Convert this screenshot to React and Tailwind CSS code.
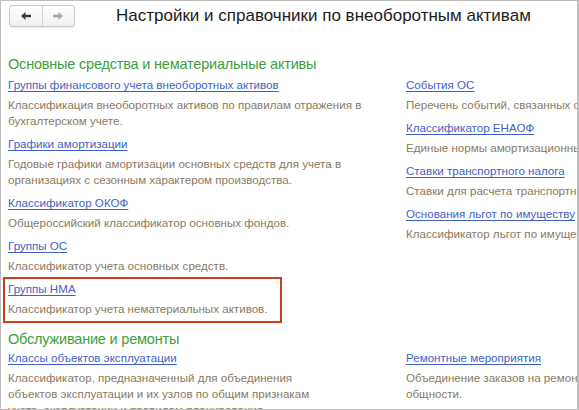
import React from "react";

const LINK = "text-[#3f63c4] underline underline-offset-[2px] decoration-[#3f63c4] leading-[16px] text-[11.6px] whitespace-nowrap";
const DESC = "text-[#8a7a62] leading-[16px] text-[11.6px] mt-[4px]";
const HEAD = "text-[14.5px] tracking-[-0.2px] leading-[20px] text-[#3d9e3d] whitespace-nowrap";

function Item({ title, desc, hl }) {
  return (
    <div className="relative mb-[7px]">
      <div className={LINK}>{title}</div>
      <div className={DESC}>{desc}</div>
      {hl && (
        <div className="absolute left-[-5px] top-[-4px] w-[279px] h-[46px] border-2 border-[#c8401c] pointer-events-none" />
      )}
    </div>
  );
}

export default function App() {
  return (
    <div
      className="relative w-[579px] h-[410px] overflow-hidden bg-white"
      style={{ fontFamily: '"Liberation Sans", Arial, sans-serif' }}
    >
      <div className="absolute inset-0 border border-[#bdbdbd] border-r-2 pointer-events-none z-10" />
      <div className="flex items-center h-[30px] pt-[1px]">
        <div className="ml-[9px] flex h-[22px] w-[66px] rounded-[3px] border border-[#c8c8c8] bg-gradient-to-b from-white to-[#f0f0f0] shadow-[0_1px_1px_rgba(0,0,0,0.08)]">
          <div className="flex-1 flex items-center justify-center border-r border-[#d4d4d4]">
            <svg width="12" height="10" viewBox="0 0 12 10">
              <path d="M1 5 L5.5 1 L5.5 3.8 L11 3.8 L11 6.2 L5.5 6.2 L5.5 9 Z" fill="#3a3a3a" />
            </svg>
          </div>
          <div className="flex-1 flex items-center justify-center">
            <svg width="12" height="10" viewBox="0 0 12 10">
              <path d="M11 5 L6.5 1 L6.5 3.8 L1 3.8 L1 6.2 L6.5 6.2 L6.5 9 Z" fill="#a8a8a8" />
            </svg>
          </div>
        </div>
        <div className="ml-[41px] text-[17px] text-[#1c1c1c] leading-[22px] whitespace-nowrap">
          Настройки и справочники по внеоборотным активам
        </div>
      </div>

      <div className="pl-[8px] pt-[24px]">
        <div className={HEAD + " mb-[3px]"}>
          Основные средства и нематериальные активы
        </div>
        <div className="flex">
          <div className="w-[398px] shrink-0 pr-[10px]">
            <Item
              title="Группы финансового учета внеоборотных активов"
              desc={<>Классификация внеоборотных активов по правилам отражения в<br />бухгалтерском учете.</>}
            />
            <Item
              title="Графики амортизации"
              desc={<>Годовые графики амортизации основных средств для учета в<br />организациях с сезонным характером производства.</>}
            />
            <Item title="Классификатор ОКОФ" desc="Общероссийский классификатор основных фондов." />
            <Item title="Группы ОС" desc="Классификатор учета основных средств." />
            <Item title="Группы НМА" desc="Классификатор учета нематериальных активов." hl />
          </div>
          <div className="w-[380px] shrink-0 whitespace-nowrap">
            <Item title="События ОС" desc="Перечень событий, связанных с основными средствами." />
            <Item title="Классификатор ЕНАОФ" desc="Единые нормы амортизационных отчислений." />
            <Item title="Ставки транспортного налога" desc="Ставки для расчета транспортного налога." />
            <Item title="Основания льгот по имуществу" desc="Классификатор льгот по имуществу." />
          </div>
        </div>

        <div className={HEAD + " mt-[5px] mb-[1px]"}>
          Обслуживание и ремонты
        </div>
        <div className="flex">
          <div className="w-[398px] shrink-0 pr-[10px]">
            <Item
              title="Классы объектов эксплуатации"
              desc={<>Классификатор, предназначенный для объединения<br />объектов эксплуатации и их узлов по общим признакам<br />учета, эксплуатации и правилам планирования.</>}
            />
          </div>
          <div className="w-[380px] shrink-0 whitespace-nowrap">
            <Item
              title="Ремонтные мероприятия"
              desc={<>Объединение заказов на ремонт по признаку их<br />общности.</>}
            />
          </div>
        </div>
      </div>
    </div>
  );
}
